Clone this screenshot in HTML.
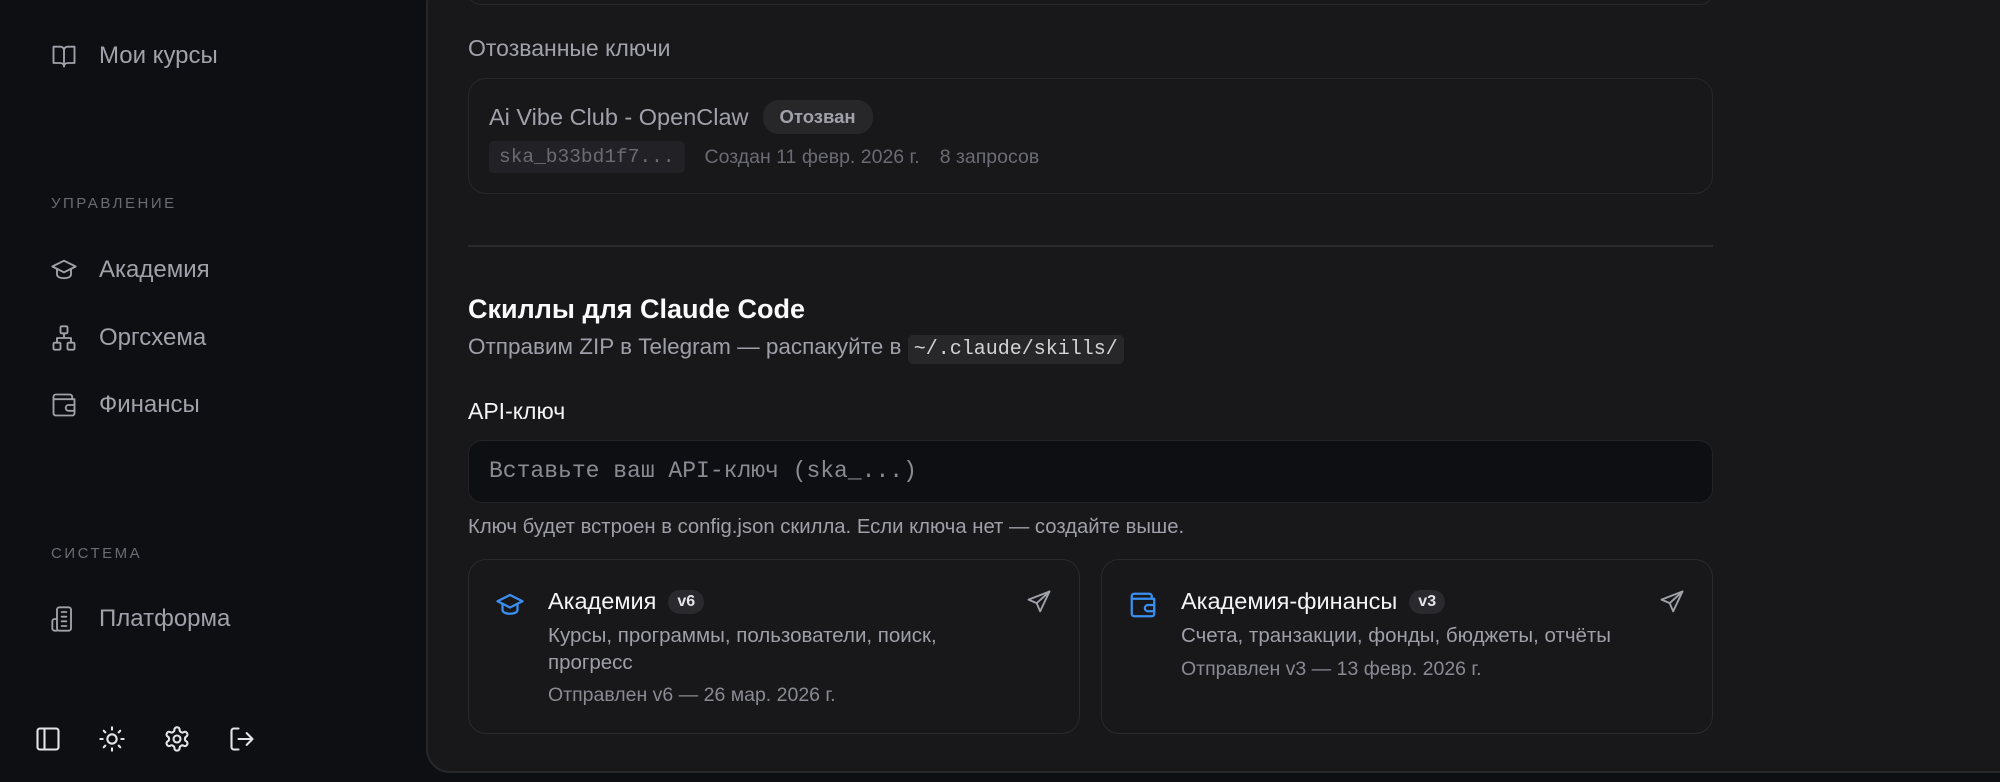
<!DOCTYPE html>
<html><head><meta charset="utf-8"><style>
*{box-sizing:border-box;margin:0;padding:0}
body{width:2000px;height:782px;background:#0e0f12;font-family:"Liberation Sans","Noto Sans CJK SC",sans-serif;position:relative;overflow:hidden;color:#e4e4e7}
.side{position:absolute;left:0;top:0;width:426px;height:782px;background:#0e0f12}
.nav{position:absolute;left:50px;display:flex;align-items:center;color:#a1a1aa;font-size:24px}
.nav svg{width:28px;height:28px;margin-right:21px;fill:none;stroke:#a1a1aa;stroke-width:1.6;stroke-linecap:round;stroke-linejoin:round}
.sec{position:absolute;left:51px;font-size:15px;letter-spacing:2.5px;color:#6b6b73}
.bi{position:absolute;top:725px;width:28px;height:28px;fill:none;stroke:#e4e4e7;stroke-width:1.8;stroke-linecap:round;stroke-linejoin:round}
.main{position:absolute;left:426px;top:-20px;width:1620px;height:793px;background:#18181b;border:2px solid #27272a;border-radius:24px}
.c{position:absolute;left:468px;width:1245px}
.card{border:1.5px solid #27272a;border-radius:18px;background:#18181b}
.mono{font-family:"Liberation Mono",monospace}
.sk{position:absolute;top:559px;width:612px;height:175px;border:1.5px solid #2a2a2e;border-radius:18px}
.sk .ic{position:absolute;left:26px;top:30px;width:30px;height:30px;fill:none;stroke:#3b8ff0;stroke-width:1.8;stroke-linecap:round;stroke-linejoin:round}
.sk .t{position:absolute;left:79px;top:28px;font-size:23.5px;color:#f4f4f5;display:flex;align-items:center}
.v{margin-left:12px;background:#2a2a2e;border-radius:12px;font-size:16px;padding:3px 9px;color:#e4e4e7;font-weight:bold}
.sk .d{position:absolute;left:79px;top:62px;font-size:20.5px;color:#9f9fa8;line-height:27px;width:440px}
.sk .s{position:absolute;left:79px;font-size:19.5px;color:#8a8a93}
.sk .snd{position:absolute;right:26px;top:28px;width:28px;height:28px;fill:none;stroke:#a1a1aa;stroke-width:1.6;stroke-linejoin:round;stroke-linecap:round}
</style></head><body>
<div class="side">
 <div class="nav" style="top:42px"><svg viewBox="0 0 24 24"><path d="M12 6v14M3 4h6a3 3 0 0 1 3 3 3 3 0 0 1 3-3h6v14h-6a3 3 0 0 0-3 3 3 3 0 0 0-3-3H3z"/></svg>Мои курсы</div>
 <div class="sec" style="top:195px">УПРАВЛЕНИЕ</div>
 <div class="nav" style="top:256px"><svg viewBox="0 0 24 24"><path d="M2 9l10-5 10 5-10 5z"/><path d="M6 11v5c0 2 3 3 6 3s6-1 6-3v-5"/></svg>Академия</div>
 <div class="nav" style="top:324px"><svg viewBox="0 0 24 24"><rect x="9" y="2" width="6" height="6" rx="1"/><rect x="3" y="16" width="6" height="6" rx="1"/><rect x="15" y="16" width="6" height="6" rx="1"/><path d="M12 8v4M6 16v-4h12v4"/></svg>Оргсхема</div>
 <div class="nav" style="top:391px"><svg viewBox="0 0 24 24"><path d="M19 7V5a2 2 0 0 0-2-2H5a2 2 0 0 0-2 2v14a2 2 0 0 0 2 2h14a2 2 0 0 0 2-2v-4"/><path d="M3 7h18v10h-5a2.5 2.5 0 0 1 0-5h5"/></svg>Финансы</div>
 <div class="sec" style="top:545px">СИСТЕМА</div>
 <div class="nav" style="top:605px"><svg viewBox="0 0 24 24"><rect x="6" y="2" width="12" height="20" rx="2"/><path d="M6 12H4a2 2 0 0 0-2 2v6a2 2 0 0 0 2 2h2M10 6h4M10 10h4M10 14h4M10 18h4"/></svg>Платформа</div>
 <svg class="bi" style="left:34px" viewBox="0 0 24 24"><rect x="3" y="3" width="18" height="18" rx="2"/><path d="M9 3v18"/></svg>
 <svg class="bi" style="left:98px" viewBox="0 0 24 24"><circle cx="12" cy="12" r="4"/><path d="M12 2v2M12 20v2M4.9 4.9l1.4 1.4M17.7 17.7l1.4 1.4M2 12h2M20 12h2M4.9 19.1l1.4-1.4M17.7 6.3l1.4-1.4"/></svg>
 <svg class="bi" style="left:163px" viewBox="0 0 24 24"><path d="M12.2 2h-.4a2 2 0 0 0-2 2v.2a2 2 0 0 1-1 1.7l-.4.3a2 2 0 0 1-2 0l-.2-.1a2 2 0 0 0-2.7.7l-.2.4a2 2 0 0 0 .7 2.7l.2.1a2 2 0 0 1 1 1.7v.5a2 2 0 0 1-1 1.7l-.2.1a2 2 0 0 0-.7 2.7l.2.4a2 2 0 0 0 2.7.7l.2-.1a2 2 0 0 1 2 0l.4.3a2 2 0 0 1 1 1.7v.2a2 2 0 0 0 2 2h.4a2 2 0 0 0 2-2v-.2a2 2 0 0 1 1-1.7l.4-.3a2 2 0 0 1 2 0l.2.1a2 2 0 0 0 2.7-.7l.2-.4a2 2 0 0 0-.7-2.7l-.2-.1a2 2 0 0 1-1-1.7v-.5a2 2 0 0 1 1-1.7l.2-.1a2 2 0 0 0 .7-2.7l-.2-.4a2 2 0 0 0-2.7-.7l-.2.1a2 2 0 0 1-2 0l-.4-.3a2 2 0 0 1-1-1.7V4a2 2 0 0 0-2-2z"/><circle cx="12" cy="12" r="3"/></svg>
 <svg class="bi" style="left:228px" viewBox="0 0 24 24"><path d="M9 21H5a2 2 0 0 1-2-2V5a2 2 0 0 1 2-2h4M16 17l5-5-5-5M21 12H9"/></svg>
</div>
<div class="main"></div>
<div class="c card" style="top:-20px;height:25px"></div>
<div class="c" style="top:35px;font-size:23px;color:#a1a1aa">Отозванные ключи</div>
<div class="c card" style="top:78px;height:116px">
 <div style="position:absolute;left:20px;top:21px;display:flex;align-items:center;font-size:23.5px;color:#a1a1aa">Ai Vibe Club - OpenClaw<span style="margin-left:14px;background:#27272a;border-radius:16px;padding:6px 17px;font-size:18.5px;font-weight:bold;color:#a1a1aa">Отозван</span></div>
 <div style="position:absolute;left:20px;top:62px;display:flex;align-items:center;font-size:19.5px;color:#6b6b73"><span class="mono" style="background:#222226;border-radius:5px;padding:5px 10px;color:#6b6b73">ska_b33bd1f7...</span><span style="margin-left:20px">Создан 11 февр. 2026 г.</span><span style="margin-left:20px">8 запросов</span></div>
</div>
<div class="c" style="top:245px;height:1.5px;background:#2a2a2e"></div>
<div class="c" style="top:294px;font-size:27px;font-weight:bold;color:#fafafa">Скиллы для Claude Code</div>
<div class="c" style="top:334px;font-size:22.5px;color:#9f9fa8">Отправим ZIP в Telegram — распакуйте в <span class="mono" style="background:#27272a;border-radius:5px;padding:3px 6px;font-size:20px;color:#d4d4d8">~/.claude/skills/</span></div>
<div class="c" style="top:398px;font-size:23px;color:#f4f4f5">API-ключ</div>
<div class="c mono" style="top:440px;height:63px;background:#0e0f12;border:1.5px solid #232327;border-radius:14px;padding:17px 20px;font-size:23px;color:#8a8a93">Вставьте ваш API-ключ (ska_...)</div>
<div class="c" style="top:516px;font-size:20.3px;color:#9f9fa8">Ключ будет встроен в config.json скилла. Если ключа нет — создайте выше.</div>
<div class="sk" style="left:468px">
 <svg class="ic" viewBox="0 0 24 24"><path d="M2 9l10-5 10 5-10 5z"/><path d="M6 11v5c0 2 3 3 6 3s6-1 6-3v-5"/></svg>
 <div class="t">Академия<span class="v">v6</span></div>
 <svg class="snd" viewBox="0 0 24 24"><path d="M21 3L3 10l7 3 3 7z"/><path d="M10 13l11-10"/></svg>
 <div class="d">Курсы, программы, пользователи, поиск, прогресс</div>
 <div class="s" style="top:124px">Отправлен v6 — 26 мар. 2026 г.</div>
</div>
<div class="sk" style="left:1101px">
 <svg class="ic" viewBox="0 0 24 24"><path d="M19 7V5a2 2 0 0 0-2-2H5a2 2 0 0 0-2 2v14a2 2 0 0 0 2 2h14a2 2 0 0 0 2-2v-4"/><path d="M3 7h18v10h-5a2.5 2.5 0 0 1 0-5h5"/></svg>
 <div class="t">Академия-финансы<span class="v">v3</span></div>
 <svg class="snd" viewBox="0 0 24 24"><path d="M21 3L3 10l7 3 3 7z"/><path d="M10 13l11-10"/></svg>
 <div class="d">Счета, транзакции, фонды, бюджеты, отчёты</div>
 <div class="s" style="top:98px">Отправлен v3 — 13 февр. 2026 г.</div>
</div>
</body></html>
